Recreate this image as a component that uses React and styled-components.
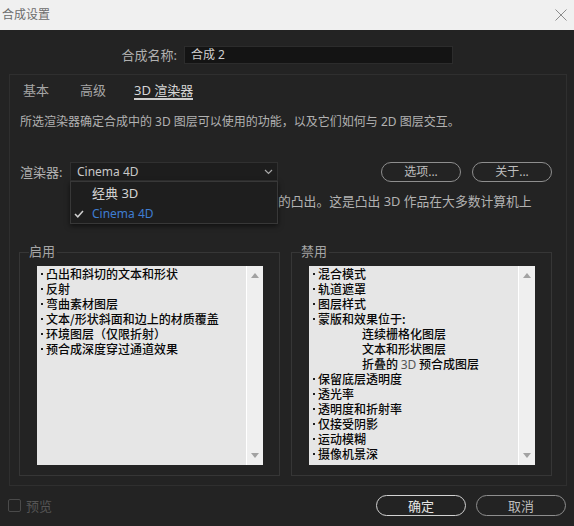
import React from 'react';
import styled, { createGlobalStyle } from 'styled-components';

const GlobalStyle = createGlobalStyle`
  html, body {
    margin: 0;
    padding: 0;
    background: #232323;
  }
  body {
    font-family: "Noto Sans", "Noto Sans CJK SC", sans-serif;
  }
  * {
    box-sizing: border-box;
  }
`;

const Dialog = styled.div`
  width: 574px;
  height: 526px;
  display: flex;
  flex-direction: column;
  background: #232323;
  overflow: hidden;
`;

const TitleBar = styled.div`
  height: 30px;
  flex: none;
  display: flex;
  align-items: center;
  justify-content: space-between;
  padding: 0 7px 0 2px;
  background: #f0f0f0;
`;

const Title = styled.span`
  font-size: 12px;
  line-height: 16px;
  color: #6c6c6c;
`;

const Body = styled.div`
  flex: 1;
  display: flex;
  flex-direction: column;
  padding: 16px 7px 0 9px;
`;

const NameRow = styled.div`
  display: flex;
  align-items: center;
  height: 18px;
`;

const NameLabel = styled.label`
  width: 168px;
  margin-right: 7px;
  text-align: right;
  font-size: 13px;
  line-height: 16px;
  color: #b0b0b0;
`;

const NameInput = styled.div`
  width: 269px;
  height: 18px;
  padding-left: 6px;
  background: #141414;
  border: 1px solid #2c2c2c;
  font-size: 12px;
  line-height: 16px;
  color: #cfcfcf;
`;

const TabPanel = styled.div`
  margin-top: 10px;
  height: 412px;
  border: 1px solid #2f2f2f;
  padding: 0 10px;
  display: flex;
  flex-direction: column;
`;

const TabBar = styled.div`
  display: flex;
  padding-left: 3px;
`;

const Tab = styled.div`
  margin-right: ${(p) => p.$gap}px;
  padding-top: 7px;
  font-size: 13px;
  line-height: 16px;
  color: ${(p) => (p.$active ? '#d6d6d6' : '#a6a6a6')};
  border-bottom: 2px solid ${(p) => (p.$active ? '#cdcdcd' : 'transparent')};
`;

const Text = styled.p`
  margin: ${(p) => p.$top}px 0 0 ${(p) => p.$left || 0}px;
  font-size: ${(p) => p.$size || 12}px;
  line-height: 16px;
  color: #b2b2b2;
  white-space: nowrap;
`;

/* the start of the sentence sits under the open dropdown */
const Covered = styled.span`
  display: inline-block;
  width: 208px;
  overflow: hidden;
  vertical-align: top;
`;

const RendererRow = styled.div`
  margin-top: 32px;
  height: 19px;
  display: flex;
  align-items: center;
  padding-right: 4px;
`;

const RowLabel = styled.span`
  width: 50px;
  font-size: 13px;
  line-height: 16px;
  color: #b2b2b2;
`;

const SelectWrap = styled.div`
  position: relative;
  width: 208px;
  height: 19px;
`;

const SelectBox = styled.div`
  height: 19px;
  display: flex;
  align-items: center;
  justify-content: space-between;
  padding: 0 4px 0 6px;
  background: #1d1d1d;
  border: 1px solid #303030;
  font-size: 12px;
  color: #c8c8c8;
`;

const Menu = styled.div`
  position: absolute;
  top: 100%;
  left: 0;
  right: 0;
  height: 43px;
  background: #1e1e1e;
  border: 1px solid #383838;
  box-shadow: 0 2px 5px rgba(0, 0, 0, 0.55);
  z-index: 2;
`;

const MenuItem = styled.div`
  height: 21px;
  display: flex;
  align-items: center;
  padding-left: 3px;
  font-size: ${(p) => (p.$selected ? 12 : 13)}px;
  color: ${(p) => (p.$selected ? '#3f7dd2' : '#d2d2d2')};
`;

const CheckSlot = styled.span`
  width: 18px;
  display: flex;
  align-items: center;
`;

const PillButton = styled.button`
  width: ${(p) => p.$width}px;
  height: ${(p) => p.$height}px;
  margin-left: ${(p) => p.$left};
  padding: 0;
  background: transparent;
  border: 1.5px solid ${(p) => (p.$primary ? '#d2d2d2' : '#8e8e8e')};
  border-radius: 11px;
  font-family: inherit;
  font-size: ${(p) => p.$size}px;
  line-height: 16px;
  color: ${(p) => (p.$primary ? '#e6e6e6' : '#bdbdbd')};
`;

const Groups = styled.div`
  margin: 43px 0 0 -1px;
  display: grid;
  grid-template-columns: 261px 261px;
  column-gap: 11px;
`;

const Group = styled.div`
  position: relative;
  height: 224px;
  border: 1px solid #363636;
  padding: 13px 16px 10px 17px;
`;

const GroupLabel = styled.span`
  position: absolute;
  top: -10px;
  left: 9px;
  padding-right: 2px;
  background: #232323;
  font-size: 13px;
  line-height: 16px;
  color: #a6a6a6;
`;

const ListBox = styled.div`
  width: 226px;
  height: 199px;
  display: flex;
  background: #e6e6e6;
`;

const Items = styled.ul`
  flex: 1;
  margin: 0;
  padding: 0 0 0 4px;
  list-style: none;
`;

const Item = styled.li`
  display: flex;
  align-items: center;
  height: 15px;
  padding-left: ${(p) => (p.$indent ? 49 : 0)}px;
  font-family: "Noto Sans CJK SC", sans-serif;
  font-size: 12px;
  font-weight: 500;
  line-height: 15px;
  color: #080808;
  white-space: pre;

  &::before {
    content: '';
    display: ${(p) => (p.$indent ? 'none' : 'block')};
    width: 2px;
    height: 2px;
    margin-right: 3px;
    background: #202020;
  }
`;

const Dim = styled.span`
  color: #555;
  font-family: "Noto Sans", sans-serif;
  font-weight: 400;
`;

const Scrollbar = styled.div`
  width: 17px;
  display: flex;
  flex-direction: column;
  align-items: center;
  justify-content: space-between;
  padding: 7px 0 7px;
  background: #efefef;
  border-left: 1px solid #ffffff;
`;

const Arrow = styled.span`
  width: 0;
  height: 0;
  border-left: 4px solid transparent;
  border-right: 4px solid transparent;
  ${(p) => (p.$down ? 'border-top' : 'border-bottom')}: 5px solid #a2a2a2;
`;

const Footer = styled.div`
  margin: 9px 1px 0 -1px;
  height: 21px;
  display: flex;
  align-items: center;
`;

const CheckBox = styled.span`
  width: 13px;
  height: 13px;
  border: 1.5px solid #4a4a4a;
  border-radius: 2px;
`;

const PreviewLabel = styled.span`
  margin-left: 5px;
  font-size: 13px;
  line-height: 16px;
  color: #555555;
`;

const Chevron = () => (
  <svg width="9" height="6" viewBox="0 0 9 6">
    <polyline points="1,1 4.5,4.5 8,1" fill="none" stroke="#a8a8a8" strokeWidth="1.2" />
  </svg>
);

const Check = () => (
  <svg width="10" height="8" viewBox="0 0 10 8">
    <polyline points="1,4 3.8,6.8 9,1" fill="none" stroke="#cfcfcf" strokeWidth="1.5" />
  </svg>
);

const CloseIcon = () => (
  <svg width="12" height="12" viewBox="0 0 12 12">
    <path d="M0.5 0.5 L11.5 11.5 M11.5 0.5 L0.5 11.5" stroke="#8c8c8c" strokeWidth="1" />
  </svg>
);

const enabled = [
  '凸出和斜切的文本和形状',
  '反射',
  '弯曲素材图层',
  '文本/形状斜面和边上的材质覆盖',
  '环境图层（仅限折射）',
  '预合成深度穿过通道效果',
];

const disabled = [
  { text: '混合模式' },
  { text: '轨道遮罩' },
  { text: '图层样式' },
  { text: '蒙版和效果位于:' },
  { text: '连续栅格化图层', indent: true },
  { text: '文本和形状图层', indent: true },
  { text: '折叠的 3D 预合成图层', indent: true },
  { text: '保留底层透明度' },
  { text: '透光率' },
  { text: '透明度和折射率' },
  { text: '仅接受阴影' },
  { text: '运动模糊' },
  { text: '摄像机景深' },
];

const renderText = (text) => {
  const parts = text.split('3D');
  if (parts.length === 1) return <span>{text}</span>;
  return (
    <span>
      {parts[0]}
      <Dim>3D</Dim>
      {parts[1]}
    </span>
  );
};

const List = ({ items }) => (
  <ListBox>
    <Items>
      {items.map((it) => (
        <Item key={it.text} $indent={it.indent}>
          {renderText(it.text)}
        </Item>
      ))}
    </Items>
    <Scrollbar>
      <Arrow />
      <Arrow $down />
    </Scrollbar>
  </ListBox>
);

export default function App() {
  return (
    <>
      <GlobalStyle />
      <Dialog>
        <TitleBar>
          <Title>合成设置</Title>
          <CloseIcon />
        </TitleBar>
        <Body>
          <NameRow>
            <NameLabel>合成名称:</NameLabel>
            <NameInput>合成 2</NameInput>
          </NameRow>

          <TabPanel>
            <TabBar>
              <Tab $gap={31}>基本</Tab>
              <Tab $gap={28}>高级</Tab>
              <Tab $gap={0} $active>3D 渲染器</Tab>
            </TabBar>

            <Text $top={14}>
              所选渲染器确定合成中的 3D 图层可以使用的功能，以及它们如何与 2D 图层交互。
            </Text>

            <RendererRow>
              <RowLabel>渲染器:</RowLabel>
              <SelectWrap>
                <SelectBox>
                  <span>Cinema 4D</span>
                  <Chevron />
                </SelectBox>
                <Menu>
                  <MenuItem>
                    <CheckSlot />
                    经典 3D
                  </MenuItem>
                  <MenuItem $selected>
                    <CheckSlot>
                      <Check />
                    </CheckSlot>
                    Cinema 4D
                  </MenuItem>
                </Menu>
              </SelectWrap>
              <PillButton $width={80} $height={20} $size={12} $left="auto">
                选项...
              </PillButton>
              <PillButton $width={80} $height={20} $size={12} $left="11px">
                关于...
              </PillButton>
            </RendererRow>

            <Text $top={12} $left={50} $size={12.8}>
              <Covered>Cinema 4D 渲染器可以支持文本和形状</Covered>
              的凸出。这是凸出 3D 作品在大多数计算机上
            </Text>

            <Groups>
              <Group>
                <GroupLabel>启用</GroupLabel>
                <List items={enabled.map((text) => ({ text }))} />
              </Group>
              <Group>
                <GroupLabel>禁用</GroupLabel>
                <List items={disabled} />
              </Group>
            </Groups>
          </TabPanel>

          <Footer>
            <CheckBox />
            <PreviewLabel>预览</PreviewLabel>
            <PillButton $width={90} $height={21} $size={13} $left="auto" $primary>
              确定
            </PillButton>
            <PillButton $width={90} $height={21} $size={13} $left="10px">
              取消
            </PillButton>
          </Footer>
        </Body>
      </Dialog>
    </>
  );
}
